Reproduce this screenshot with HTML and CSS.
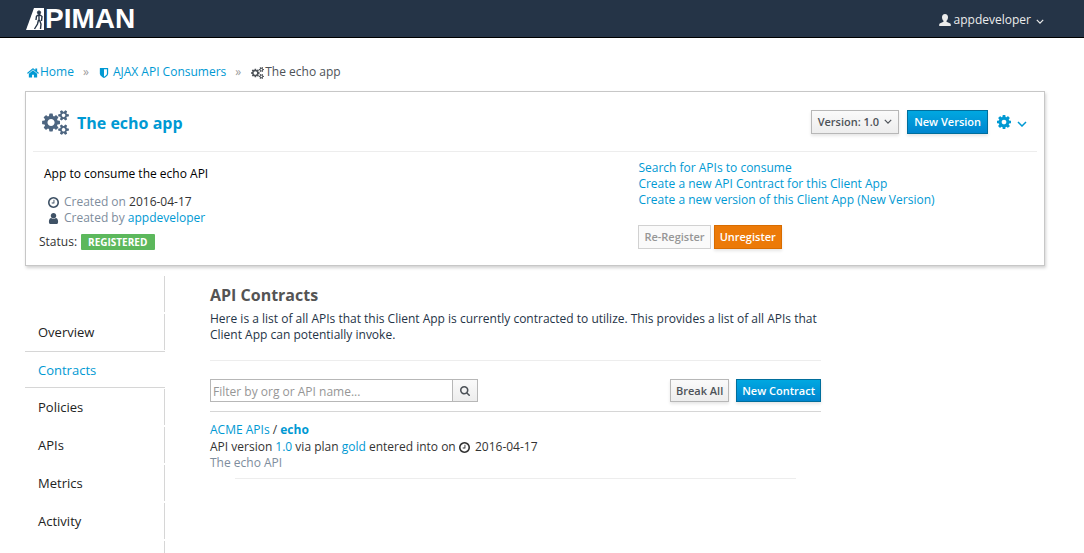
FILE: index.html
```html
<!DOCTYPE html>
<html lang="en">
<head>
<meta charset="utf-8">
<title>apiman - The echo app</title>
<link rel="stylesheet" href="styles.css">
</head>
<body>
<svg class="sprite" aria-hidden="true">
  <symbol id="cogs" viewBox="-64 0 1920 1792"><path d="M832 896q0-106-75-181t-181-75-181 75-75 181 75 181 181 75 181-75 75-181zm768 512q0-52-38-90t-90-38-90 38-38 90q0 53 37.500 90.500t90.500 37.500 90.500-37.500 37.500-90.500zm0-1024q0-52-38-90t-90-38-90 38-38 90q0 53 37.500 90.500t90.500 37.500 90.500-37.500 37.500-90.500zm-384 421v185q0 10-7 19.500t-16 10.500l-155 24q-11 35-32 76 34 48 90 115 7 11 7 20 0 12-7 19-23 30-82.500 89.500t-78.500 59.500q-11 0-21-7l-115-90q-37 19-77 31-11 108-23 155-7 24-30 24h-186q-11 0-20-7.500t-10-17.500l-23-153q-34-10-75-31l-118 89q-7 7-20 7-11 0-21-8-144-133-144-160 0-9 7-19 10-14 41-53t47-61q-23-44-35-82l-152-24q-10-1-17-9.500t-7-19.500v-185q0-10 7-19.500t16-10.500l155-24q11-35 32-76-34-48-90-115-7-11-7-20 0-12 7-20 22-30 82-89t79-59q11 0 21 7l115 90q34-18 77-32 11-108 23-154 7-24 30-24h186q11 0 20 7.500t10 17.500l23 153q34 10 75 31l118-89q8-7 20-7 11 0 21 8 144 133 144 160 0 8-7 19-12 16-42 54t-45 60q23 48 34 82l152 23q10 2 17 10.500t7 19.500zm640 533v140q0 16-149 31-12 27-30 52 51 113 51 138 0 4-4 7-122 71-124 71-8 0-46-47t-52-68q-20 2-30 2t-30-2q-14 21-52 68t-46 47q-2 0-124-71-4-3-4-7 0-25 51-138-18-25-30-52-149-15-149-31v-140q0-16 149-31 13-29 30-52-51-113-51-138 0-4 4-7 4-2 35-20t59-34 30-16q8 0 46 46.500t52 67.500q20-2 30-2t30 2q51-71 92-112l6-2q4 0 124 70 4 3 4 7 0 25-51 138 17 23 30 52 149 15 149 31zm0-1024v140q0 16-149 31-12 27-30 52 51 113 51 138 0 4-4 7-122 71-124 71-8 0-46-47t-52-68q-20 2-30 2t-30-2q-14 21-52 68t-46 47q-2 0-124-71-4-3-4-7 0-25 51-138-18-25-30-52-149-15-149-31v-140q0-16 149-31 13-29 30-52-51-113-51-138 0-4 4-7 4-2 35-20t59-34 30-16q8 0 46 46.500t52 67.500q20-2 30-2t30 2q51-71 92-112l6-2q4 0 124 70 4 3 4 7 0 25-51 138 17 23 30 52 149 15 149 31z"/></symbol>
  <symbol id="cog" viewBox="128 128 1536 1536"><path d="M1152 896q0-106-75-181t-181-75-181 75-75 181 75 181 181 75 181-75 75-181zm512-109v222q0 12-8 23t-20 13l-185 28q-19 54-39 91 35 50 107 138 10 12 10 25t-9 23q-27 37-99 108t-94 71q-12 0-26-9l-138-108q-44 23-91 38-16 136-29 186-7 28-36 28h-222q-14 0-24.500-8.500t-11.500-21.500l-28-184q-49-16-90-37l-141 107q-10 9-25 9-14 0-25-11-126-114-165-168-7-10-7-23 0-12 8-23 15-21 51-66.500t54-70.500q-27-50-41-99l-183-27q-13-2-21-12.500t-8-23.500v-222q0-12 8-23t19-13l186-28q14-46 39-92-40-57-107-138-10-12-10-24 0-10 9-23 26-36 98.500-107.500t94.500-71.500q13 0 26 10l138 107q44-23 91-38 16-136 29-186 7-28 36-28h222q14 0 24.500 8.500t11.500 21.500l28 184q49 16 90 37l142-107q9-9 24-9 13 0 25 10 129 119 165 170 7 8 7 22 0 12-8 23-15 21-51 66.500t-54 70.500q26 50 41 98l183 28q13 2 21 12.500t8 23.500z"/></symbol>
  <symbol id="home" viewBox="64 64 1664 1664"><path d="M1472 992v480q0 26-19 45t-45 19h-384v-384h-256v384h-384q-26 0-45-19t-19-45v-480q0-1 .5-3t.5-3l575-474 575 474q1 2 1 6zm223-69l-62 74q-8 9-21 11h-3q-13 0-21-7l-692-577-692 577q-12 8-24 7-13-2-21-11l-62-74q-8-10-7-23.500t11-21.500l719-599q32-26 76-26t76 26l244 204v-195q0-14 9-23t23-9h192q14 0 23 9t9 23v408l219 182q10 8 11 21.500t-7 23.500z"/></symbol>
  <symbol id="shield" viewBox="128 128 1536 1536"><path d="M1344 960v-640h-448v1137q119-63 213-137 235-184 235-360zm192-768v768q0 86-33.500 170.500t-83 150-118 127.500-126.500 103-121 77.500-89.500 49.500-42.500 20q-12 6-26 6t-26-6q-16-7-42.500-20t-89.500-49.500-121-77.500-126.500-103-118-127.500-83-150-33.500-170.500v-768q0-26 19-45t45-19h1152q26 0 45 19t19 45z"/></symbol>
  <symbol id="user" viewBox="128 128 1536 1536"><path d="M1536 1399q0 109-62.500 187t-150.500 78h-854q-88 0-150.500-78t-62.500-187q0-85 8.500-160.500t31.500-152 58.500-131 94-89 134.500-34.500q131 128 313 128t313-128q76 0 134.500 34.500t94 89 58.500 131 31.500 152 8.500 160.500zm-256-887q0 159-112.500 271.500t-271.500 112.500-271.500-112.500-112.500-271.500 112.500-271.500 271.500-112.500 271.500 112.500 112.500 271.500z"/></symbol>
  <symbol id="clock" viewBox="128 128 1536 1536"><path d="M1024 544v448q0 14-9 23t-23 9h-320q-14 0-23-9t-9-23v-64q0-14 9-23t23-9h224v-352q0-14 9-23t23-9h64q14 0 23 9t9 23zm416 352q0-148-73-273t-198-198-273-73-273 73-198 198-73 273 73 273 198 198 273 73 273-73 198-198 73-273zm224 0q0 209-103 385.500t-279.500 279.500-385.500 103-385.500-103-279.500-279.500-103-385.500 103-385.500 279.500-279.500 385.500-103 385.500 103 279.500 279.500 103 385.500z"/></symbol>
  <symbol id="search" viewBox="64 128 1664 1664"><path d="M1216 832q0-185-131.500-316.500t-316.500-131.500-316.500 131.500-131.500 316.500 131.500 316.500 316.500 131.500 316.500-131.500 131.500-316.500zm512 832q0 52-38 90t-90 38q-54 0-90-38l-343-342q-179 124-399 124-143 0-273.500-55.500t-225-150-150-225-55.500-273.500 55.500-273.500 150-225 225-150 273.500-55.500 273.500 55.500 225 150 150 225 55.500 273.500q0 220-124 399l343 343q37 37 37 90z"/></symbol>
  <symbol id="person" viewBox="0 0 12 12"><path d="M6 0c2 0 3 1.300 3 3.200 0 1.600-.6 2.800-1.500 3.600v1l3.300 1.400c.7.300 1 .8 1 1.400V12H.2v-1.400c0-.6.300-1.100 1-1.400l3.300-1.400v-1C3.600 6 3 4.800 3 3.200 3 1.300 4 0 6 0z"/></symbol>
  <symbol id="angle" viewBox="0 0 10 6"><path d="M1 1l4 4 4-4" fill="none" stroke="currentColor" stroke-width="1.500"/></symbol>
</svg>

<header class="navbar">
  <a class="brand" href="#" aria-label="apiman">
    <svg class="brand-mark" viewBox="0 0 19 22" aria-hidden="true">
      <path d="M8 0h10v22H0z"/>
      <g class="brand-man">
        <circle cx="13" cy="4.500" r="1.600"/>
        <path d="M10.500 8l3-1.500 2.500 2-.5 4.500M13 7v6M10.500 8l-.5 4M12.500 12l-1 4-3 5M13.500 12l1.500 4-.5 5"/>
      </g>
    </svg>
    <span>PIMAN</span>
  </a>
  <button class="account" type="button">
    <svg class="icon-person" aria-hidden="true"><use href="#person"/></svg>
    appdeveloper
    <svg class="angle" aria-hidden="true"><use href="#angle"/></svg>
  </button>
</header>

<div class="page">
  <nav aria-label="Breadcrumb">
    <ol class="breadcrumb">
      <li><a href="#"><svg class="icon icon-home" aria-hidden="true"><use href="#home"/></svg>Home</a></li>
      <li><a class="spaced" href="#"><svg class="icon icon-small" aria-hidden="true"><use href="#shield"/></svg>AJAX API Consumers</a></li>
      <li><svg class="icon icon-cogs" aria-hidden="true"><use href="#cogs"/></svg>The echo app</li>
    </ol>
  </nav>

  <section class="card">
    <div class="card-head">
      <h1><svg class="title-icon" aria-hidden="true"><use href="#cogs"/></svg><a href="#">The echo app</a></h1>
      <div class="actions">
        <button class="btn" type="button">Version: 1.0 <svg class="angle" aria-hidden="true"><use href="#angle"/></svg></button>
        <button class="btn btn-primary" type="button">New Version</button>
        <button class="settings" type="button" aria-label="Settings">
          <svg class="icon-cog" aria-hidden="true"><use href="#cog"/></svg>
          <svg class="angle angle-large" aria-hidden="true"><use href="#angle"/></svg>
        </button>
      </div>
    </div>
    <div class="card-body">
      <div class="summary">
        <p class="description">App to consume the echo API</p>
        <ul class="facts">
          <li><svg class="icon" aria-hidden="true"><use href="#clock"/></svg><span>Created on <b>2016-04-17</b></span></li>
          <li><svg class="icon" aria-hidden="true"><use href="#user"/></svg><span>Created by <a href="#">appdeveloper</a></span></li>
        </ul>
        <p class="status">Status: <span class="badge">REGISTERED</span></p>
      </div>
      <div class="tasks">
        <a href="#">Search for APIs to consume</a>
        <a href="#">Create a new API Contract for this Client App</a>
        <a href="#">Create a new version of this Client App (New Version)</a>
        <div class="task-buttons">
          <button class="btn btn-slim" type="button" disabled>Re-Register</button>
          <button class="btn btn-warning btn-slim" type="button">Unregister</button>
        </div>
      </div>
    </div>
  </section>

  <div class="columns">
    <nav class="side" aria-label="Client app">
      <ul>
        <li></li>
        <li><a href="#">Overview</a></li>
        <li class="active"><a href="#" aria-current="page">Contracts</a></li>
        <li><a href="#">Policies</a></li>
        <li><a href="#">APIs</a></li>
        <li><a href="#">Metrics</a></li>
        <li><a href="#">Activity</a></li>
        <li class="rest"></li>
      </ul>
    </nav>
    <main>
      <h2>API Contracts</h2>
      <p class="intro">Here is a list of all APIs that this Client App is currently contracted to utilize. This provides a list of all APIs that Client App can potentially invoke.</p>
      <div class="toolbar">
        <form class="filter">
          <input type="text" aria-label="Filter by org or API name" placeholder="Filter by org or API name...">
          <button type="button" aria-label="Search"><svg class="icon-search" aria-hidden="true"><use href="#search"/></svg></button>
        </form>
        <div class="toolbar-buttons">
          <button class="btn btn-short btn-slim" type="button">Break All</button>
          <button class="btn btn-primary btn-short btn-slim" type="button">New Contract</button>
        </div>
      </div>
      <article class="contract">
        <div class="contract-name"><a href="#">ACME APIs</a> / <a class="strong" href="#">echo</a></div>
        <div>API version <a href="#">1.0</a> via plan <a href="#">gold</a> entered into on <svg class="icon icon-inline" aria-hidden="true"><use href="#clock"/></svg> 2016-04-17</div>
        <div class="muted">The echo API</div>
      </article>
      <hr>
    </main>
  </div>
</div>
</body>
</html>
```
FILE: styles.css
```css
* {
  box-sizing: border-box;
}

body {
  margin: 0;
  min-height: 100vh;
  display: flex;
  flex-direction: column;
  background: #fff;
  color: #333;
  font: 12px/16px "Open Sans", "Noto Sans", sans-serif;
}

h1, h2, p, ul, ol {
  margin: 0;
  padding: 0;
}

ul, ol {
  list-style: none;
}

a {
  color: #0099d3;
  text-decoration: none;
}

button, input {
  font: inherit;
}

svg {
  fill: currentColor;
  flex: none;
}

.sprite {
  position: absolute;
  width: 0;
  height: 0;
}

.icon {
  width: 11px;
  height: 11px;
}

.icon-home {
  width: 12px;
  height: 12px;
}

.icon-small {
  width: 10px;
  height: 10px;
}

.icon-cogs {
  width: 13px;
  height: 12px;
}

.icon-person {
  width: 12px;
  height: 12px;
}

.icon-inline {
  margin: 0 2px 0 0;
  vertical-align: -2px;
}

.icon-cog {
  width: 14px;
  height: 14px;
}

.icon-search {
  width: 10px;
  height: 10px;
}

.angle {
  width: 8px;
  height: 5px;
}

.angle-large {
  width: 10px;
  height: 6px;
  margin-top: 4px;
}

.navbar {
  display: flex;
  justify-content: space-between;
  height: 38px;
  padding: 0 40px 0 26px;
  background: #253447;
  border-bottom: 1px solid #000;
}

.brand {
  display: flex;
  align-items: center;
  color: #fff;
  font: bold 28px/36px "Liberation Sans", Arial, sans-serif;
}

.brand-mark {
  width: 19px;
  height: 22px;
}

.brand-man {
  fill: #253447;
  stroke: #253447;
}

.brand-man path {
  fill: none;
  stroke-width: 1.4;
}

.account {
  display: flex;
  align-items: center;
  gap: 3px;
  padding: 2px 0 0;
  border: 0;
  background: none;
  color: #ececec;
}

.account .angle {
  margin: 4px 0 0 2px;
}

.page {
  flex: 1;
  display: flex;
  flex-direction: column;
  padding: 26px 39px 0 25px;
}

.breadcrumb {
  display: flex;
  color: #4d5258;
}

.breadcrumb li,
.breadcrumb a {
  display: flex;
  align-items: center;
}

.breadcrumb li {
  padding-left: 2px;
}

.breadcrumb .icon {
  margin: 1px 2px 0 0;
}

.breadcrumb .icon-home,
.breadcrumb .icon-cogs {
  margin-right: 1px;
}

.breadcrumb .spaced {
  gap: 2px;
}

.breadcrumb li:not(:last-child)::after {
  content: "»";
  margin: 0 8px 0 9px;
  color: #9c9c9c;
}

.card {
  margin-top: 11px;
  padding: 0 7px 15px;
  border: 1px solid #c7c7c7;
  box-shadow: 1px 2px 3px rgba(0, 0, 0, .18);
}

.card-head {
  display: flex;
  justify-content: space-between;
  align-items: center;
  height: 60px;
  padding: 0 9px;
  border-bottom: 1px solid #ededed;
}

h1 {
  display: flex;
  align-items: center;
  gap: 8px;
  padding-top: 2px;
  font-size: 16px;
  line-height: 24px;
}

.title-icon {
  width: 27px;
  height: 25px;
  color: #4d6580;
}

.actions {
  display: flex;
  align-items: center;
  gap: 8px;
}

.btn {
  display: inline-flex;
  align-items: center;
  justify-content: center;
  gap: 5px;
  height: 24px;
  padding: 0 6px;
  border: 1px solid #b7b7b7;
  background: linear-gradient(#fafafa, #ededed);
  box-shadow: 0 2px 3px rgba(0, 0, 0, .1);
  color: #4d5258;
  font-size: 11px;
  font-weight: 600;
  line-height: 16px;
  white-space: nowrap;
}

.btn-primary {
  border-color: #006e9c;
  background: linear-gradient(#00a8e1, #0085cf);
  color: #fff;
}

.btn-warning {
  border-color: #d86c00;
  background: #ec7a08;
  color: #fff;
}

.btn-slim {
  padding: 0 5px;
}

.btn-short {
  height: 23px;
}

.btn:disabled {
  border-color: #d1d1d1;
  background: #fafafa;
  box-shadow: none;
  color: #969696;
}

.settings {
  display: flex;
  align-items: center;
  gap: 6px;
  padding: 0 1px;
  border: 0;
  background: none;
  color: #0099d3;
}

.card-body {
  display: flex;
}

.summary {
  flex: 0 0 60%;
  padding: 14px 0 0 6px;
}

.description {
  padding-left: 5px;
  color: #000;
}

.facts {
  padding: 12px 0 8px 9px;
  color: #7e8d9d;
}

.facts li {
  display: flex;
  gap: 5px;
}

.facts .icon {
  margin-top: 3px;
  color: #3f5266;
}

.facts b {
  color: #333;
  font-weight: 400;
}

.status {
  display: flex;
  align-items: center;
  gap: 4px;
}

.badge {
  padding: 0 8px 0 7px;
  border-radius: 1px;
  background: #5cb85c;
  color: #fff;
  font-size: 10px;
  font-weight: 700;
}

.tasks {
  display: flex;
  flex-direction: column;
  align-items: flex-start;
  padding: 8px 0 0 3px;
}

.task-buttons {
  display: flex;
  gap: 3px;
  margin-top: 17px;
}

.columns {
  flex: 1;
  display: flex;
  gap: 45px;
  margin-top: 10px;
}

.side {
  flex: 0 0 140px;
  display: flex;
}

.side ul {
  flex: 1;
  display: flex;
  flex-direction: column;
}

.side li {
  height: 36px;
  margin-bottom: 2px;
  padding-left: 13px;
  border-right: 1px solid #d6d6d6;
  font-size: 13px;
  line-height: 36px;
}

.side a {
  display: block;
  color: #222;
}

.side .active {
  height: 37px;
  margin: -1px 0 1px;
  border: solid #d6d6d6;
  border-width: 1px 0;
}

.side .active a {
  color: #0099d3;
}

.side .rest {
  flex: 1;
  height: auto;
  margin: 0;
}

main {
  flex: 0 0 60%;
  padding-right: 1px;
}

h2 {
  padding-top: 7px;
  color: #545454;
  font-size: 16px;
  line-height: 24px;
}

.intro {
  padding: 4px 0 17px;
  border-bottom: 1px solid #ededed;
  color: #253447;
}

.toolbar {
  display: flex;
  justify-content: space-between;
  padding: 18px 0 9px;
  border-bottom: 1px solid #d6d6d6;
}

.filter {
  display: flex;
}

.filter input {
  width: 243px;
  height: 23px;
  padding: 1px 2px 0;
  border: 1px solid #b7b7b7;
}

.filter input::placeholder {
  color: #969696;
}

.filter button {
  display: flex;
  align-items: center;
  justify-content: center;
  width: 25px;
  padding: 0;
  border: 1px solid #b7b7b7;
  border-left: 0;
  background: linear-gradient(#fafafa, #ededed);
  color: #4d5258;
}

.toolbar-buttons {
  display: flex;
  gap: 7px;
}

.contract {
  padding: 10px 0 7px;
}

.contract-name {
  margin-bottom: 1px;
}

.strong {
  font-weight: 700;
}

.muted {
  color: #7e8d9d;
}

hr {
  margin: 0 25px;
  border: 0;
  border-top: 1px solid #ededed;
}
```
